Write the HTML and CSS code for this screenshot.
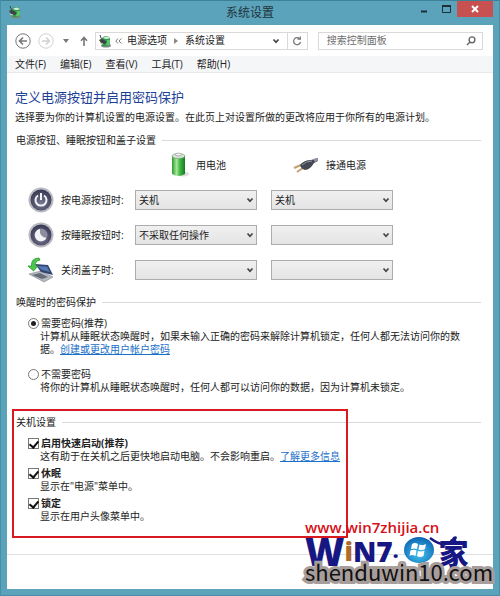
FILE: index.html
```
<!DOCTYPE html>
<html lang="zh-CN">
<head>
  <meta charset="UTF-8" />
  <title>系统设置</title>
  <link rel="stylesheet" href="styles.css">
</head>
<body>
  <!-- shared icons -->
  <svg class="defs" width="0" height="0" aria-hidden="true">
    <symbol id="icon-app" viewBox="0 0 14 14">
      <ellipse cx="8" cy="11.500" rx="5" ry="2" fill="#7d8a86"/>
      <path d="M4 4 Q8 0 12 4 V10 Q8 14 4 11 Z" fill="#2f9a4b"/>
      <path d="M5 4 Q8 1 12 4 Q9 6 5 4Z" fill="#d5ead8"/>
      <path d="M9 6 H12 V10 Q10 12 8 11Z" fill="#59c46c"/>
      <path d="M2 1 L3.500 5" stroke="#3d4448"/>
      <path d="M1 6 Q4 4 6 6 L9 8 L7 10 L3 9Z" fill="#3d4448"/>
      <path d="M2 9 L5 10" stroke="#d9d0b0"/>
    </symbol>
    <symbol id="icon-chevron" viewBox="0 0 8 6">
      <path d="M1.500 1.500 L4 4.300 L6.500 1.500" fill="none" stroke="#454545" stroke-width="1.700"/>
    </symbol>
    <radialGradient id="dark" cx="50%" cy="65%" r="60%">
      <stop offset="0" stop-color="#77778f"/>
      <stop offset="1" stop-color="#3b3b56"/>
    </radialGradient>
    <linearGradient id="green" x1="0" x2="1" y1="0" y2="0">
      <stop offset="0" stop-color="#2d9a31"/>
      <stop offset="0.350" stop-color="#a5e79a"/>
      <stop offset="0.600" stop-color="#43b844"/>
      <stop offset="1" stop-color="#167a20"/>
    </linearGradient>
    <radialGradient id="globe" cx="50%" cy="65%" r="65%">
      <stop offset="0" stop-color="#45c5f2"/>
      <stop offset="1" stop-color="#0c64b0"/>
    </radialGradient>
  </svg>

  <div class="window">
    <header class="titlebar">
      <svg class="app-icon" width="14" height="14"><use href="#icon-app"/></svg>
      <h1>系统设置</h1>
      <div class="window-buttons">
        <button type="button" aria-label="最小化"><svg width="8" height="10"><path d="M1 7.500H7" stroke="#1d2e35" stroke-width="2"/></svg></button>
        <button type="button" aria-label="最大化"><svg width="9" height="8"><path d="M.5 1V7.500H8.500V1" fill="none" stroke="#1d2e35"/><path d="M0 1H9" stroke="#1d2e35" stroke-width="2"/></svg></button>
        <button type="button" class="close" aria-label="关闭"><svg width="8" height="8"><path d="M1 1L7 7M7 1L1 7" stroke="#fff" stroke-width="2"/></svg></button>
      </div>
    </header>

    <div class="client">
      <nav class="toolbar">
        <button type="button" aria-label="后退"><svg width="16" height="16" fill="none" stroke="#777"><circle cx="8" cy="8" r="7.200"/><path d="M12 8H5M8 4.500L4.500 8L8 11.500" stroke-width="1.600"/></svg></button>
        <button type="button" aria-label="前进"><svg width="16" height="16" fill="none" stroke="#d2d2d2"><circle cx="8" cy="8" r="7.200"/><path d="M4 8H11M8 4.500L11.500 8L8 11.500" stroke-width="1.600"/></svg></button>
        <button type="button" class="recent" aria-label="最近"><svg width="6" height="4"><path d="M0 0H6L3 4Z" fill="#777"/></svg></button>
        <button type="button" class="up" aria-label="向上"><svg width="8" height="10" fill="none" stroke="#777" stroke-width="1.600"><path d="M4 10V2M1 4.800L4 1.500L7 4.800"/></svg></button>
        <div class="address">
          <svg width="14" height="14"><use href="#icon-app"/></svg>
          <svg class="back-mark" width="7" height="6" fill="none" stroke="#777"><path d="M3 .5L.8 3L3 5.500M6.300 .5L4 3L6.300 5.500"/></svg>
          <a href="#">电源选项</a>
          <svg width="4" height="6"><path d="M0 0L4 3L0 6Z" fill="#888"/></svg>
          <a href="#">系统设置</a>
          <button type="button" class="history" aria-label="展开"><svg width="8" height="6"><use href="#icon-chevron"/></svg></button>
          <button type="button" class="refresh" aria-label="刷新"><svg width="10" height="10" fill="none" stroke="#777" stroke-width="1.300"><path d="M8 3.200A3.500 3.500 0 1 0 8.500 6M5.500 3.200H8.300V.5"/></svg></button>
        </div>
        <div class="search">
          <input type="text" placeholder="搜索控制面板" aria-label="搜索控制面板">
          <svg width="10" height="10" fill="none" stroke="#666" stroke-width="1.400"><circle cx="6" cy="3.800" r="2.900"/><path d="M4 6L1 9"/></svg>
        </div>
      </nav>

      <div class="menubar">
        <a href="#">文件(F)</a>
        <a href="#">编辑(E)</a>
        <a href="#">查看(V)</a>
        <a href="#">工具(T)</a>
        <a href="#">帮助(H)</a>
      </div>

      <main>
        <h2>定义电源按钮并启用密码保护</h2>
        <p class="intro">选择要为你的计算机设置的电源设置。在此页上对设置所做的更改将应用于你所有的电源计划。</p>

        <section>
          <h3>电源按钮、睡眠按钮和盖子设置</h3>
          <div class="power-grid">
            <span></span>
            <div class="source battery">
              <svg width="18" height="26">
                <ellipse cx="12" cy="22" rx="6" ry="2.500" fill="#ddd"/>
                <path d="M1 4V22Q7.500 26 14 22V4Z" fill="url(#green)"/>
                <ellipse cx="7.500" cy="4" rx="6.500" ry="2.500" fill="#d3e6d2" stroke="#73947a" stroke-width=".6"/>
                <ellipse cx="7.500" cy="2.500" rx="3" ry="1.400" fill="#f4f4f4" stroke="#888" stroke-width=".6"/>
              </svg>
              用电池
            </div>
            <div class="source plug">
              <svg width="26" height="16">
                <path d="M1 11L8 8M4 15L10 11" stroke="#c6a06f" stroke-width="2"/>
                <path d="M7 8Q11 3 18 3L25 1V4L21 6Q17 13 12 13Q8 12 7 8Z" fill="#454852"/>
                <path d="M9 8Q13 4 19 4" fill="none" stroke="#92969f"/>
                <path d="M20 2L25 1V4L22 5Z" fill="#8d93a5"/>
              </svg>
              接通电源
            </div>

            <label for="power-battery">
              <svg width="26" height="26">
                <circle cx="13" cy="13" r="12.500" fill="#b9b9c2"/><circle cx="13" cy="13" r="10.500" fill="url(#dark)"/>
                <path d="M10 8.500A5.500 5.500 0 1 0 16 8.500M13 6V13" fill="none" stroke="#f2f2f7" stroke-width="2"/>
              </svg>
              按电源按钮时:
            </label>
            <div class="select"><select id="power-battery"><option>关机</option></select><svg width="8" height="6"><use href="#icon-chevron"/></svg></div>
            <div class="select"><select aria-label="按电源按钮时，接通电源"><option>关机</option></select><svg width="8" height="6"><use href="#icon-chevron"/></svg></div>

            <label for="sleep-battery">
              <svg width="26" height="26">
                <circle cx="13" cy="13" r="12.500" fill="#b9b9c2"/><circle cx="13" cy="13" r="10.500" fill="url(#dark)"/>
                <circle cx="13" cy="13" r="6.500" fill="#8d8da2"/>
                <path d="M12 7A6.200 6.200 0 1 0 18.500 16Q11 15 12 7Z" fill="#f2f2f7"/>
              </svg>
              按睡眠按钮时:
            </label>
            <div class="select"><select id="sleep-battery"><option>不采取任何操作</option></select><svg width="8" height="6"><use href="#icon-chevron"/></svg></div>
            <div class="select"><select aria-label="按睡眠按钮时，接通电源"><option></option></select><svg width="8" height="6"><use href="#icon-chevron"/></svg></div>

            <label for="lid-battery">
              <svg width="26" height="26">
                <path d="M1 17L13 14L25 20L16 25Z" fill="#b4b9c1" stroke="#7e848e" stroke-width=".6"/>
                <path d="M4 18L12 16L20 20L14 22Z" fill="#666d78"/>
                <path d="M7 7L20 8L25 18L13 15Z" fill="#30426e"/>
                <path d="M9 9L19 9.500L22 15L14 13Z" fill="#5478b2"/>
                <path d="M11 1Q3 1 3.500 9H0L5.500 14L10 9H7Q7 4 12 3Z" fill="#4cc94a" stroke="#218b2b" stroke-width=".7"/>
              </svg>
              关闭盖子时:
            </label>
            <div class="select"><select id="lid-battery"><option></option></select><svg width="8" height="6"><use href="#icon-chevron"/></svg></div>
            <div class="select"><select aria-label="关闭盖子时，接通电源"><option></option></select><svg width="8" height="6"><use href="#icon-chevron"/></svg></div>
          </div>
        </section>

        <section>
          <h3>唤醒时的密码保护</h3>
          <div class="option spaced">
            <label><input type="radio" name="password" checked>需要密码(推荐)</label>
            <p>计算机从睡眠状态唤醒时，如果未输入正确的密码来解除计算机锁定，任何人都无法访问你的数据。<a href="#">创建或更改用户帐户密码</a></p>
          </div>
          <div class="option">
            <label><input type="radio" name="password">不需要密码</label>
            <p>将你的计算机从睡眠状态唤醒时，任何人都可以访问你的数据，因为计算机未锁定。</p>
          </div>
        </section>

        <section class="shutdown">
          <h3>关机设置</h3>
          <div class="option">
            <label><input type="checkbox" checked><b>启用快速启动(推荐)</b></label>
            <p>这有助于在关机之后更快地启动电脑。不会影响重启。<a href="#">了解更多信息</a></p>
          </div>
          <div class="option">
            <label><input type="checkbox" checked><b>休眠</b></label>
            <p>显示在"电源"菜单中。</p>
          </div>
          <div class="option">
            <label><input type="checkbox" checked><b>锁定</b></label>
            <p>显示在用户头像菜单中。</p>
          </div>
          <div class="highlight"></div>
        </section>
      </main>

      <footer></footer>
    </div>

    <div class="watermark">
      <div class="site">www.win7zhijia.cn</div>
      <div class="brand">
        <span class="brand-w">W</span><span class="brand-i">i</span><span class="brand-n">N7</span><span class="brand-dot">.</span>
        <svg width="70" height="34">
          <ellipse cx="16" cy="14" rx="15" ry="13" fill="url(#globe)"/>
          <path d="M9 8Q12 6 15 8L14 13Q11 12 8 13Z M16.500 8.500Q20 10 23 8L22 13Q19 15 15.500 13.500Z M7.500 14.500Q11 13 13.500 14.500L12.500 20Q9 18 6.500 20Z M15 15Q18 16 21.500 14.500L20.500 20Q17 22 14 20Z" fill="#fff"/>
          <path d="M27 2Q39 11 46 7Q56 0 51 2Q47 7 57 6" fill="none" stroke="#171783" stroke-width="2.500"/>
        </svg>
        <span class="brand-jia">家</span>
      </div>
      <div class="domain">shenduwin10.com</div>
    </div>
  </div>
</body>
</html>
```

FILE: styles.css
```
* {
  box-sizing: border-box;
}
body {
  margin: 0;
  font-family: "Open Sans", "Noto Sans CJK SC", sans-serif;
  font-size: 10px;
  line-height: 13px;
  color: #222;
}
h1, h2, h3, p {
  margin: 0;
  font-weight: normal;
}
button {
  padding: 0;
  border: none;
  background: none;
  display: flex;
  align-items: center;
  justify-content: center;
}
svg {
  display: block;
  flex: none;
}
a {
  color: #1a6fc9;
}
.defs {
  position: absolute;
}

/* window frame */
.window {
  position: relative;
  display: flex;
  flex-direction: column;
  min-height: 100vh;
  padding: 0 6px 6px;
  background: #5ba2bb;
  border: 1px solid #4790aa;
  border-top-color: #3d8199;
}
.titlebar {
  display: flex;
  justify-content: center;
  position: relative;
  height: 24px;
}
.titlebar h1 {
  font-size: 12px;
  line-height: 24px;
  color: #20343c;
}
.app-icon {
  position: absolute;
  left: 1px;
  top: 4px;
}
.window-buttons {
  position: absolute;
  top: 0;
  right: 0;
  display: flex;
}
.window-buttons button {
  width: 22px;
  height: 16px;
}
.window-buttons .close {
  width: 36px;
  background: #c75050;
}
.client {
  flex: 1;
  display: flex;
  flex-direction: column;
  background: #fff;
}

/* navigation */
.toolbar {
  display: flex;
  align-items: center;
  gap: 7px;
  height: 31px;
  padding: 0 10px 0 8px;
}
.recent {
  margin-left: 2px;
}
.up {
  margin-left: 4px;
}
.address {
  flex: 7;
  display: flex;
  align-items: center;
  gap: 7px;
  height: 18px;
  padding-left: 2px;
  border: 1px solid #d9d9d9;
}
.back-mark {
  margin: 0 -2px 0 -4px;
}
.address a, .menubar a {
  color: #222;
  text-decoration: none;
}
.history {
  margin-left: auto;
}
.refresh {
  width: 20px;
  height: 16px;
  border-left: 1px solid #d9d9d9;
}
.search {
  flex: 5;
  display: flex;
  align-items: center;
  height: 18px;
  margin-left: 3px;
  padding: 0 6px 0 8px;
  border: 1px solid #d9d9d9;
}
.search input {
  flex: 1;
  min-width: 0;
  padding: 0;
  border: none;
  outline: none;
  font: inherit;
}
.search input::placeholder {
  color: #6d6d6d;
}
.menubar {
  display: flex;
  gap: 14px;
  height: 17px;
  padding: 0 8px;
  line-height: 16px;
  background: #f5f6f7;
  border-bottom: 1px solid #e8e9ea;
}

/* page */
main {
  flex: 1;
  padding: 14px 12px 12px 8px;
}
h2 {
  font-size: 13px;
  line-height: 20px;
  color: #1c3f95;
}
.intro {
  line-height: 20px;
}
section {
  margin-top: 6px;
}
section + section {
  margin-top: 12px;
}
h3 {
  display: flex;
  align-items: center;
  gap: 6px;
  padding-left: 1px;
  font-size: 10px;
  line-height: 14px;
}
h3::after {
  content: "";
  flex: 1;
  height: 1px;
  background: #d5dadf;
}
.power-grid {
  display: grid;
  grid-template-columns: 93px minmax(0, 122px) minmax(0, 122px);
  grid-auto-rows: 26px;
  gap: 9px 14px;
  margin-top: 5px;
  padding-left: 13px;
  align-items: center;
}
.power-grid label {
  display: flex;
  align-items: center;
  gap: 7px;
  white-space: nowrap;
}
.source {
  display: flex;
  align-items: center;
  gap: 7px;
}
.battery {
  padding-left: 36px;
}
.plug {
  padding-left: 22px;
}
.select {
  position: relative;
}
.select select {
  appearance: none;
  display: block;
  width: 100%;
  height: 20px;
  padding: 0 20px 0 3px;
  border: 1px solid #acacac;
  border-radius: 0;
  background: linear-gradient(#f0f0f0, #e4e4e4);
  color: #222;
  font: inherit;
}
.select svg {
  position: absolute;
  right: 3px;
  top: 7px;
  pointer-events: none;
}

/* options */
.option {
  margin-top: 3px;
  padding: 0 16px 0 13px;
}
h3 + .option {
  margin-top: 7px;
}
.option.spaced {
  margin-bottom: 11px;
}
.option label {
  display: flex;
  align-items: center;
  gap: 2px;
  line-height: 14px;
}
.option p {
  padding-left: 12px;
}
.option input {
  appearance: none;
  flex: none;
  display: grid;
  place-items: center;
  width: 11px;
  height: 11px;
  margin: 0;
  border: 1px solid #777;
  background: #fff;
}
.option input[type="radio"] {
  border-radius: 50%;
}
.option input[type="radio"]:checked::before {
  content: "";
  width: 5px;
  height: 5px;
  border-radius: 50%;
  background: #222;
}
.option input[type="checkbox"]:checked::before {
  content: "";
  width: 4px;
  height: 7px;
  margin-bottom: 2px;
  border: solid #111;
  border-width: 0 2px 2px 0;
  transform: rotate(40deg);
}
section.shutdown {
  position: relative;
  margin-top: 21px;
}
.highlight {
  position: absolute;
  left: -3px;
  top: -6px;
  bottom: -15px;
  width: 72%;
  border: 2px solid #d8191f;
  pointer-events: none;
}
footer {
  height: 35px;
  border-top: 1px solid #dfdfdf;
}

/* watermark over the lower right corner */
.watermark {
  position: absolute;
  right: 4px;
  bottom: 9px;
  width: 190px;
  white-space: nowrap;
  pointer-events: none;
}
.site {
  font-size: 15px;
  line-height: 18px;
  font-weight: 600;
  color: #d60f16;
}
.brand {
  display: flex;
  height: 20px;
  font-family: "Open Sans", sans-serif;
  font-weight: 800;
  line-height: 30px;
  color: #171783;
}
.brand-w {
  font-size: 38px;
}
.brand-i {
  font-size: 26px;
  color: #b06a2a;
}
.brand-n {
  font-size: 28px;
}
.brand-dot {
  margin-right: 4px;
  font-size: 20px;
}
.brand-jia {
  margin-left: -34px;
  font-family: "Noto Sans CJK SC", sans-serif;
  font-size: 30px;
}
.domain {
  position: relative;
  font-family: "Noto Sans CJK SC", sans-serif;
  font-size: 22px;
  line-height: 30px;
  color: #111;
  -webkit-text-stroke: 6px #a79d9b;
  paint-order: stroke fill;
}
```
